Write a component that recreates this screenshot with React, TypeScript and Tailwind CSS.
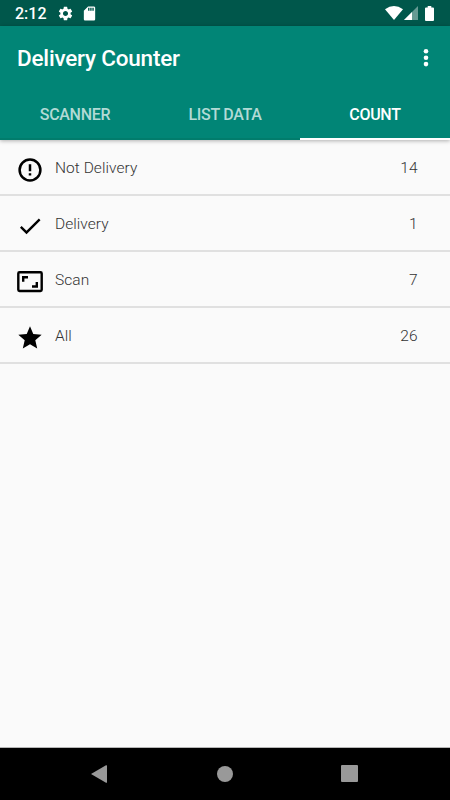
import type { ReactNode } from "react";
import { MdCheck, MdSdStorage, MdSettings, MdStar } from "react-icons/md";

const tabs = ["SCANNER", "LIST DATA", "COUNT"];

export default function App() {
  const activeTab = "COUNT";

  return (
    <div className="flex h-[800px] w-[450px] flex-col overflow-hidden bg-[#fafafa] font-['Roboto',sans-serif]">
      <StatusBar />

      <header className="z-10 h-[114px] shrink-0 bg-[#018576] shadow-[0_1px_4px_rgba(0,0,0,0.3)]">
        <div className="flex h-[63px] items-center justify-between pr-[21px] pl-[17px]">
          <h1 className="pt-px text-[22.5px] leading-none font-medium tracking-[-0.2px] text-white">
            Delivery Counter
          </h1>
          <svg className="h-[18px] w-[6px] text-white" viewBox="0 0 6 18">
            <circle cx="3" cy="2.3" r="2.3" fill="currentColor" />
            <circle cx="3" cy="8.7" r="2.3" fill="currentColor" />
            <circle cx="3" cy="15.1" r="2.3" fill="currentColor" />
          </svg>
        </div>

        <nav className="grid h-[51px] grid-cols-3">
          {tabs.map((tab) => (
            <button
              key={tab}
              className={
                tab === activeTab
                  ? "border-b-2 border-white pt-[2px] text-[16px] font-medium tracking-[-0.3px] text-white"
                  : "border-b-2 border-[#017c6c] pt-[2px] text-[16px] font-medium tracking-[-0.3px] text-[#b2dad5]"
              }
            >
              {tab}
            </button>
          ))}
        </nav>
      </header>

      <main className="flex-1">
        <CountRow icon={<AlertIcon />} label="Not Delivery" value={14} />
        <CountRow icon={<MdCheck />} label="Delivery" value={1} />
        <CountRow icon={<ScanIcon />} label="Scan" value={7} />
        <CountRow icon={<MdStar />} label="All" value={26} />
      </main>

      <NavigationBar />
    </div>
  );
}

function CountRow({
  icon,
  label,
  value,
}: {
  icon: ReactNode;
  label: string;
  value: number;
}) {
  return (
    <div className="flex h-[55.9px] items-start border-b-2 border-[#e0e0e0] pr-[32px] pl-[16px] text-[#333]">
      <div className="mt-[16px] text-[28px] text-black">{icon}</div>
      <p className="mt-[18px] ml-[11px] flex-1 text-[15.5px] leading-5 font-light tracking-[0.05px]">
        {label}
      </p>
      <p className="mt-[18px] text-[15.5px] leading-5 font-light tracking-[0.3px]">
        {value}
      </p>
    </div>
  );
}

function AlertIcon() {
  return (
    <svg
      className="h-[28px] w-[28px]"
      viewBox="0 0 28 28"
      fill="none"
      stroke="currentColor"
      strokeWidth="2.5"
    >
      <circle cx="14" cy="14" r="10.4" />
      <path d="M14 8.2v7M14 17.2v2.4" />
    </svg>
  );
}

function ScanIcon() {
  return (
    <svg
      className="h-[28px] w-[28px]"
      viewBox="0 0 28 28"
      fill="none"
      stroke="currentColor"
      strokeWidth="2.4"
    >
      <rect x="2.3" y="4.3" width="23.4" height="18.7" rx="1.2" />
      <path d="M7.2 13.7V9.2h4.8M20.8 14v4.5H16" />
    </svg>
  );
}

function StatusBar() {
  return (
    <div className="flex h-[26px] shrink-0 items-center bg-[#00574b] pr-[16px] pl-[15px] text-white">
      <span className="w-[42px] pt-[2px] text-[16px] leading-none font-medium">
        2:12
      </span>
      <MdSettings className="h-[17px] w-[17px]" />
      <MdSdStorage className="ml-[7px] h-[17px] w-[17px]" />
      <div className="flex-1" />
      <svg className="h-[14px] w-[18px]" viewBox="0 0 18 14">
        <path d="M0 3.2Q9-3.2 18 3.2L9 14Z" fill="currentColor" />
      </svg>
      <svg className="ml-[1px] h-[14px] w-[14px]" viewBox="0 0 14 14">
        <path d="M0 14 14 0V14Z" fill="currentColor" opacity=".4" />
        <path d="M0 14 8 6V14Z" fill="currentColor" />
      </svg>
      <svg className="ml-[7px] h-[15px] w-[9px]" viewBox="0 0 9 15">
        <path
          d="M2.7 0h3.6v1.5H8q1 0 1 1V14q0 1-1 1H1q-1 0-1-1V2.5q0-1 1-1h1.7Z"
          fill="currentColor"
        />
      </svg>
    </div>
  );
}

function NavigationBar() {
  return (
    <div className="flex h-[53px] shrink-0 items-center justify-between border-t border-[#b5b5b5] bg-black pr-[92px] pb-px pl-[91px] text-[#999]">
      <svg className="h-[18px] w-[16px]" viewBox="0 0 16 18">
        <path d="M0 9 15 .3q1-.5 1 .5v16.4q0 1-1 .5Z" fill="currentColor" />
      </svg>
      <div className="ml-px h-[16px] w-[16px] rounded-full bg-[#999]" />
      <div className="h-[17px] w-[17px] rounded-[1px] bg-[#999]" />
    </div>
  );
}
